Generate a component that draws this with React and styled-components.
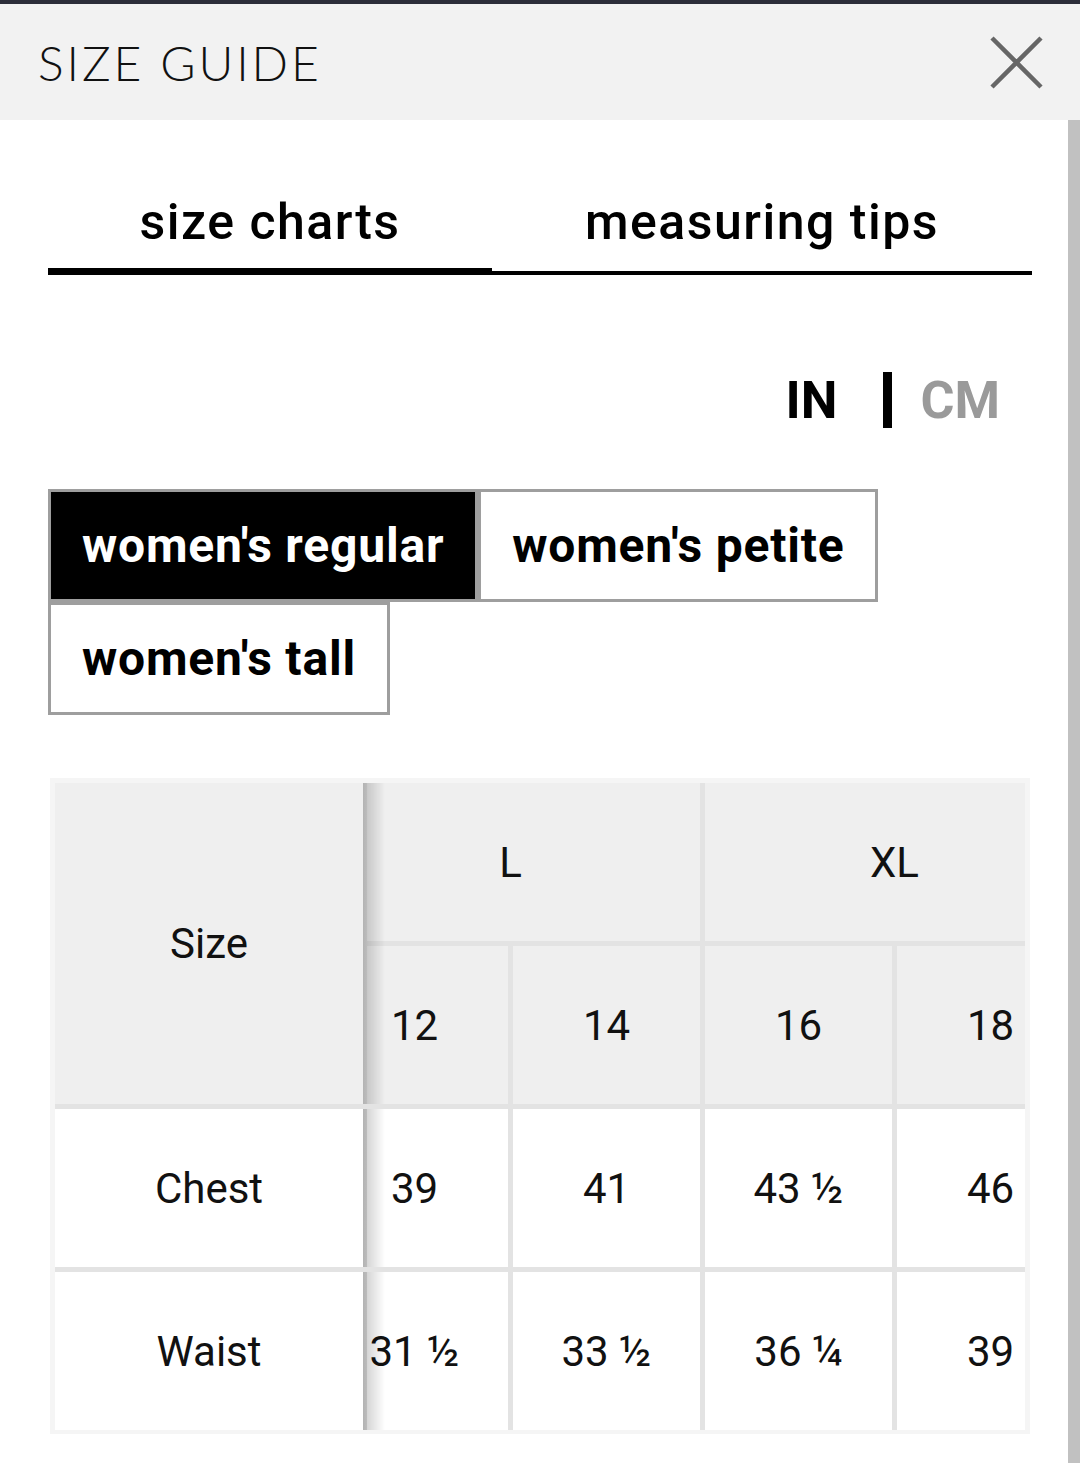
import { useLayoutEffect, useRef } from "react";
import styled, { createGlobalStyle } from "styled-components";

const GlobalStyle = createGlobalStyle`
  html, body {
    margin: 0;
    padding: 0;
    background: #fff;
  }
  body {
    font-family: Roboto, "Liberation Sans", Arial, sans-serif;
    color: #000;
  }
  * {
    box-sizing: border-box;
  }
`;

const tabs = [
  { label: "size charts", active: true, width: "444px" },
  { label: "measuring tips", active: false },
];

const fits = [
  { label: "women's regular", active: true },
  { label: "women's petite" },
  { label: "women's tall" },
];

const rows = [
  { name: "Chest", values: ["39", "41", "43 ½", "46"] },
  { name: "Waist", values: ["31 ½", "33 ½", "36 ¼", "39"] },
];

function CloseIcon() {
  return (
    <svg width="53" height="53" viewBox="0 0 53 53" aria-hidden="true">
      <path d="M2 2 L51 51 M51 2 L2 51" stroke="#666" strokeWidth="4.5" fill="none" />
    </svg>
  );
}

export default function App() {
  const scrollRef = useRef(null);

  useLayoutEffect(() => {
    if (scrollRef.current) scrollRef.current.scrollLeft = 51;
  }, []);

  return (
    <Page>
      <GlobalStyle />
      <TopStrip />
      <Header>
        <Title>SIZE GUIDE</Title>
        <CloseButton aria-label="close">
          <CloseIcon />
        </CloseButton>
      </Header>

      <Body>
        <Content>
          <Tabs>
            {tabs.map((t) => (
              <Tab key={t.label} $active={t.active} $width={t.width}>
                {t.label}
              </Tab>
            ))}
          </Tabs>

          <Units>
            <Unit $active>IN</Unit>
            <Divider />
            <Unit>CM</Unit>
          </Units>

          <FitList>
            {fits.map((f) => (
              <FitButton key={f.label} $active={f.active}>
                {f.label}
              </FitButton>
            ))}
          </FitList>

          <TableFrame ref={scrollRef}>
            <Grid>
              <Cell $head $sticky $rows={2}>Size</Cell>
              <Cell $head $cols={2}>L</Cell>
              <Cell $head $cols={2}>XL</Cell>
              {["12", "14", "16", "18"].map((n) => (
                <Cell key={n} $head>{n}</Cell>
              ))}
              {rows.map((r) => [
                <Cell key={r.name} $sticky>{r.name}</Cell>,
                ...r.values.map((v, i) => <Cell key={r.name + i}>{v}</Cell>),
              ])}
            </Grid>
          </TableFrame>
        </Content>
        <ScrollTrack />
      </Body>
    </Page>
  );
}

const Page = styled.div`
  display: flex;
  flex-direction: column;
  min-height: 100vh;
`;

const TopStrip = styled.div`
  height: 4px;
  background: #2c2e3a;
`;

const Header = styled.header`
  display: flex;
  align-items: center;
  justify-content: space-between;
  height: 116px;
  padding: 0 37px 0 38px;
  background: #f2f2f2;
`;

const Title = styled.h1`
  margin: 0;
  font-family: Lato, "Open Sans", sans-serif;
  font-weight: 300;
  font-size: 48px;
  letter-spacing: 2.9px;
  color: #111;
`;

const CloseButton = styled.button`
  display: flex;
  padding: 0;
  border: 0;
  background: none;
  cursor: pointer;
`;

const Body = styled.main`
  display: flex;
  flex: 1;
`;

const Content = styled.div`
  flex: 1;
  padding: 0 36px 0 48px;
`;

const ScrollTrack = styled.div`
  width: 12px;
  background: #c1c1c1;
`;

const Tabs = styled.nav`
  display: flex;
  align-items: flex-end;
  margin-top: 72px;
`;

const Tab = styled.div`
  flex: ${(p) => (p.$width ? `0 0 ${p.$width}` : "1")};
  text-align: center;
  font-size: 50px;
  font-weight: 500;
  line-height: 60px;
  padding-bottom: ${(p) => (p.$active ? "16px" : "19px")};
  border-bottom: ${(p) => (p.$active ? "7px" : "4px")} solid #000;
  letter-spacing: 1.5px;
`;

const Units = styled.div`
  display: flex;
  align-items: center;
  justify-content: flex-end;
  margin-top: 97px;
  padding-right: 32px;
  height: 56px;
`;

const Unit = styled.span`
  font-size: 52px;
  font-weight: 700;
  color: ${(p) => (p.$active ? "#000" : "#9a9a9a")};
`;

const Divider = styled.span`
  width: 9px;
  height: 56px;
  background: #000;
  margin: 0 28px 0 46px;
`;

const FitList = styled.div`
  display: flex;
  flex-wrap: wrap;
  margin-top: 61px;
  width: 860px;
`;

const FitButton = styled.button`
  height: 113px;
  padding: 0 31px;
  border: 3px solid #9e9e9e;
  background: ${(p) => (p.$active ? "#000" : "#fff")};
  color: ${(p) => (p.$active ? "#fff" : "#000")};
  font-family: Roboto, "Liberation Sans", sans-serif;
  font-size: 48px;
  font-weight: 700;
  letter-spacing: 0.8px;
  cursor: pointer;
`;

const TableFrame = styled.div`
  margin: 63px 0 0 2px;
  width: 980px;
  border: 5px solid #f5f5f5;
  border-bottom-width: 4px;
  overflow-x: auto;
  scrollbar-width: none;
  &::-webkit-scrollbar {
    display: none;
  }
`;

const Grid = styled.div`
  display: grid;
  grid-template-columns: 312px repeat(4, 187px);
  grid-auto-rows: 158px;
  gap: 5px;
  width: max-content;
  background: #e3e3e3;
`;

const Cell = styled.div`
  display: flex;
  align-items: center;
  justify-content: center;
  grid-row: ${(p) => (p.$rows ? `span ${p.$rows}` : "auto")};
  grid-column: ${(p) => (p.$cols ? `span ${p.$cols}` : "auto")};
  background: ${(p) => (p.$head ? "#efefef" : "#fff")};
  font-size: 42px;
  font-weight: 400;
  color: #111;
  ${(p) =>
    p.$sticky &&
    `
    position: sticky;
    left: 0;
    z-index: 2;
    border-right: 4px solid #e0e0e0;
    &::after {
      content: "";
      position: absolute;
      top: 0;
      bottom: 0;
      left: 100%;
      width: 22px;
      background: linear-gradient(to right, rgba(0,0,0,0.2), rgba(0,0,0,0));
    }
  `}
`;
